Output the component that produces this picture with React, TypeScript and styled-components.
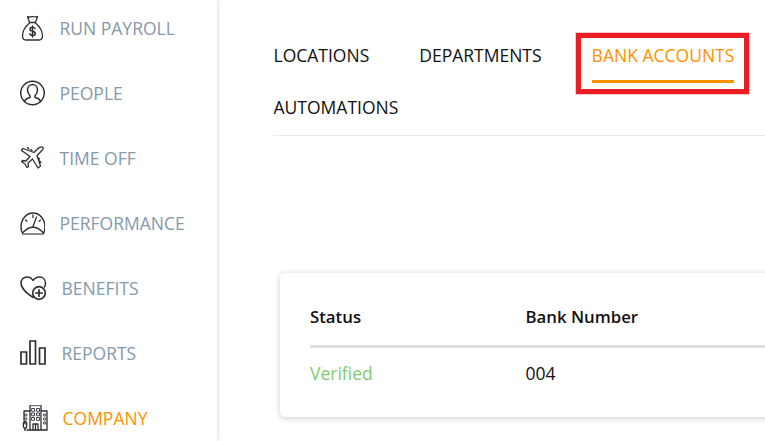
import React from "react";
import styled, { createGlobalStyle } from "styled-components";

const Global = createGlobalStyle`
  html, body { margin: 0; padding: 0; height: 100%; overflow: hidden; background: #fff; }
  body { font-family: "Open Sans", "Liberation Sans", sans-serif; }
`;

const Page = styled.div`
  display: flex;
  height: 441px;
  width: 765px;
  overflow: hidden;
`;

const Sidebar = styled.nav`
  flex: 0 0 217px;
  height: 441px;
  background: #fff;
  box-shadow: 1px 0 4px rgba(0, 0, 0, 0.14);
  display: flex;
  flex-direction: column;
  gap: 9px;
  overflow: hidden;
  position: relative;
`;

const NavItem = styled.div<{ $active?: boolean }>`
  flex: 0 0 56px;
  display: flex;
  align-items: center;
  gap: 14.5px;
  padding-left: 20px;
  font-size: 17.5px;
  color: ${(p) => (p.$active ? "#ff9100" : "#8599aa")};
`;

const NavIcon = styled.svg`
  flex: none;
  fill: none;
  stroke: #2b2f33;
  stroke-width: 1.3;
  stroke-linecap: round;
  stroke-linejoin: round;
`;

const Main = styled.main`
  flex: 1;
  min-width: 0;
  overflow: hidden;
  padding: 43px 0 0 56px;
`;

const Tabs = styled.div`
  display: flex;
  flex-wrap: wrap;
  column-gap: 50px;
  row-gap: 12px;
  padding-left: 0.5px;
  border-bottom: 1px solid #ececec;
`;

const Tab = styled.div<{ $active?: boolean }>`
  position: relative;
  height: 40px;
  font-size: 17.5px;
  line-height: 24px;
  color: ${(p) => (p.$active ? "#ff9100" : "#111")};
`;

const Underline = styled.div`
  height: 3px;
  margin-top: 13px;
  background: #ff9100;
`;

const Callout = styled.div`
  position: absolute;
  left: -15.5px;
  right: -15px;
  top: -10px;
  bottom: -11px;
  border: 5px solid #ec1c24;
  box-shadow: 0 0 0 0.5px rgba(236, 28, 36, 0.5);
`;

const Card = styled.section`
  box-sizing: border-box;
  width: 640px;
  height: 144px;
  margin: 137px 0 0 7px;
  padding: 28px 30px 0;
  border-radius: 5px;
  background: #fff;
  box-shadow: 0 1px 6px rgba(0, 0, 0, 0.2);
`;

const HeadRow = styled.div`
  display: grid;
  grid-template-columns: 215.5px 1fr;
  height: 40px;
  padding-top: 4px;
  line-height: 24px;
  border-bottom: 3px solid #dedede;
  font-size: 16.8px;
  font-weight: 600;
  color: #111;
`;

const BodyRow = styled.div`
  display: grid;
  grid-template-columns: 215.5px 1fr;
  align-items: center;
  height: 50px;
  font-size: 17.5px;
  color: #111;
`;

const Verified = styled.span`
  color: #7fcc6b;
`;

const BagIcon = () => (
  <NavIcon width="25" height="28" viewBox="0 0 25 28">
    <path d="M7.500 2.500c2 1 3.500.5 5 0 1.500.5 3 .8 5 0L15.500 8.500h-6z" />
    <path d="M9.500 9C6 12 2.500 17 2.500 22c0 2.500 1.500 4 3.500 4h13c2.500 0 3.500-1.500 3.500-4 0-5-3.500-10-7-13" />
    <path strokeWidth="1.500" d="M15 14.500c-.5-1-1.500-1.300-2.500-1.300-1.500 0-2.500.8-2.500 2 0 2.800 5.300 1.300 5.300 4.200 0 1.200-1.200 2-2.800 2-1.200 0-2.300-.5-2.700-1.500M12.500 12v11" />
  </NavIcon>
);

const PersonIcon = () => (
  <NavIcon width="25" height="26" viewBox="0 0 25 26">
    <circle cx="12.500" cy="13" r="11.800" strokeWidth="1.500" />
    <path strokeWidth="1.500" d="M4.500 21.500c.5-2.500 2.500-3 5-3.800.8-.3.8-1.700.3-2.300C8.500 14 7.500 12.500 7.500 10 7.500 7 9.500 4.500 12.500 4.500s5 2.500 5 5.500c0 2.500-1 4-2.300 5.400-.5.6-.5 2 .3 2.300 2.500.8 4.500 1.300 5 3.800" />
  </NavIcon>
);

const PlaneIcon = () => (
  <NavIcon width="25" height="26" viewBox="0 0 25 26">
    <path d="M23 2.500c-1-1-3.500-.5-5 1L14 7.500 3 3.500 1.500 5.500l8.500 6-4 4.500-3.500-.5-1 1L5 19l2 3.500 1.500-1-.5-3.500 4.500-4L18 23l2.500-2L17 10.500l4.500-4.500C23 4.500 24 3.500 23 2.500z" />
    <path d="M7.500 2.500l1.500 1.500M11 4.500l1 1M19.500 16l1.500 1.500M18.500 13l1 1" />
  </NavIcon>
);

const GaugeIcon = () => (
  <NavIcon width="25" height="24" viewBox="0 0 25 24">
    <path d="M3 23C1.500 21 1 18.500 1 16 1 8.500 6 2 13 2s12 6.500 12 14c0 2.500-.5 5-2 7" strokeWidth="1.400" />
    <path d="M3 21.500Q13 11 23 21.500" />
    <path d="M3 23h20" stroke="#8a8a8a" strokeWidth="2" strokeLinecap="butt" />
    <path d="M13 15.500L16.500 6M13 4v2.500M5.500 9l1.500 1.200M20.500 9L19 10.200" />
  </NavIcon>
);

const HeartIcon = () => (
  <NavIcon width="27" height="26" viewBox="0 0 27 26">
    <path strokeWidth="1.500" d="M13 22.500C8 19 1.500 14.500 1 8.500 .8 4.500 3.500 2 7 2c2.500 0 4.800 1.300 6 3.500C14.500 3.300 16.700 2 19.500 2c3.500 0 6 2.500 6 6 0 1.500-.3 2.800-1 4" />
    <circle cx="19" cy="18" r="6.300" strokeWidth="1.700" />
    <path d="M19 14.800v6.400M15.800 18h6.400" strokeWidth="1.700" />
  </NavIcon>
);

const BarsIcon = () => (
  <NavIcon width="27" height="26" viewBox="0 0 27 26">
    <path strokeLinejoin="miter" strokeWidth="1.700" d="M1 12h5.500v12H1zM10 1h5.500v23H10zM19.500 8H25v16h-5.500z" />
  </NavIcon>
);

const towerWindows = [3.5, 8, 12.5].flatMap((y) => [
  { x: 12, y },
  { x: 17, y },
]);
const sideWindows = [9, 13, 17].flatMap((y) => [
  { x: 24, y },
  { x: 5, y },
]);

const BuildingIcon = () => (
  <NavIcon width="28" height="26" viewBox="0 0 28 26" strokeWidth="1">
    <path stroke="#777" d="M10 .5h11" />
    <path d="M10 25V1M21 1v24M21 6h6v19H7M10 6H4v9" />
    {towerWindows.map((w) => (
      <rect key={`t${w.x}-${w.y}`} x={w.x} y={w.y} width="2.500" height="2.800" strokeWidth="0.900" />
    ))}
    {sideWindows.map((w) => (
      <rect key={`s${w.x}-${w.y}`} x={w.x} y={w.y} width="1.800" height="2" strokeWidth="0.800" />
    ))}
    <ellipse cx="5" cy="20" rx="1.700" ry="3.500" />
    <path d="M5 23.500V26M13 25v-6h5v6M15.500 19v6" />
  </NavIcon>
);

const items: { label: string; Icon: React.FC; active?: boolean }[] = [
  { label: "RUN PAYROLL", Icon: BagIcon },
  { label: "PEOPLE", Icon: PersonIcon },
  { label: "TIME OFF", Icon: PlaneIcon },
  { label: "PERFORMANCE", Icon: GaugeIcon },
  { label: "BENEFITS", Icon: HeartIcon },
  { label: "REPORTS", Icon: BarsIcon },
  { label: "COMPANY", Icon: BuildingIcon, active: true },
];

export default function App() {
  return (
    <Page>
      <Global />
      <Sidebar>
        {items.map(({ label, Icon, active }) => (
          <NavItem key={label} $active={active}>
            <Icon />
            <span>{label}</span>
          </NavItem>
        ))}
      </Sidebar>
      <Main>
        <Tabs>
          <Tab>LOCATIONS</Tab>
          <Tab>DEPARTMENTS</Tab>
          <Tab $active>
            BANK ACCOUNTS
            <Underline />
            <Callout />
          </Tab>
          <Tab>AUTOMATIONS</Tab>
        </Tabs>
        <Card>
          <HeadRow>
            <span>Status</span>
            <span>Bank Number</span>
          </HeadRow>
          <BodyRow>
            <Verified>Verified</Verified>
            <span>004</span>
          </BodyRow>
        </Card>
      </Main>
    </Page>
  );
}
